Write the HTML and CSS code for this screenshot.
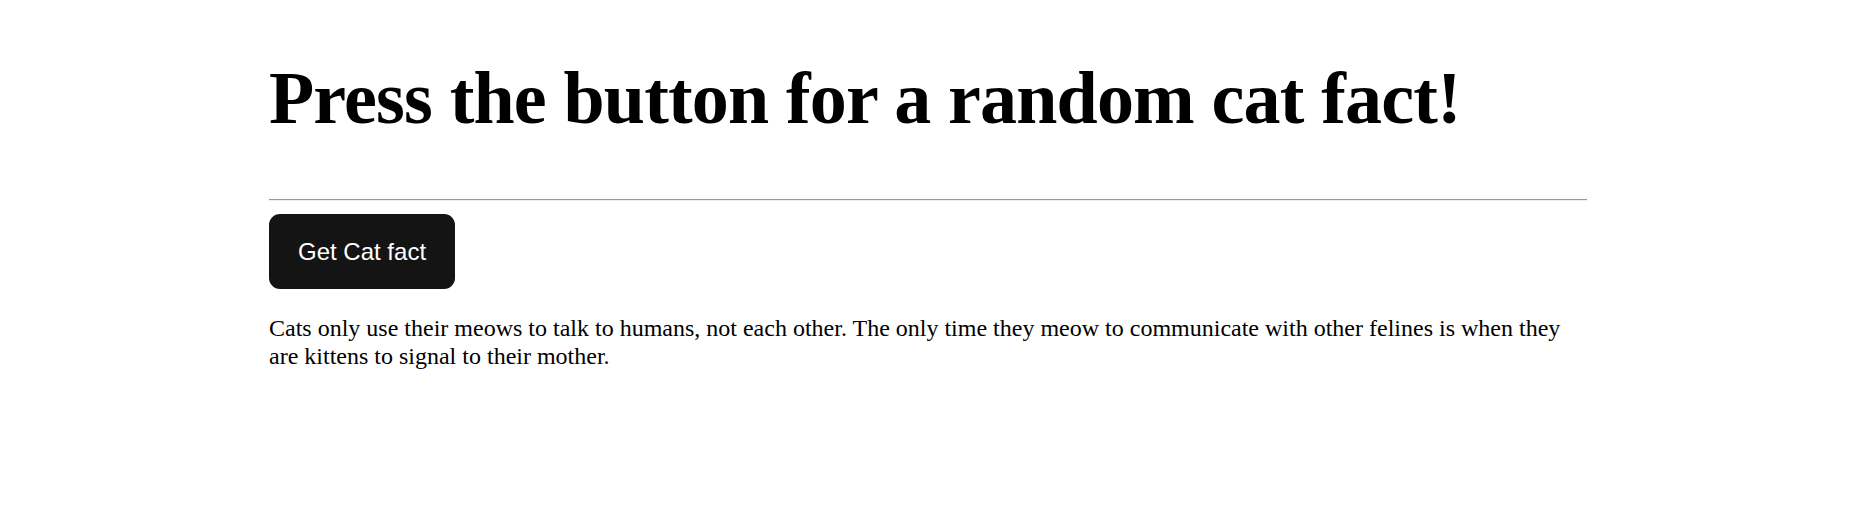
FILE: index.html
```html
<!DOCTYPE html>
<html>
<head>
<meta charset="utf-8">
<link rel="stylesheet" href="styles.css">
</head>
<body>
<main class="page">
  <h1 class="title">Press the button for a random cat fact!</h1>
  <hr class="rule">
  <button class="fact-btn">Get Cat fact</button>
  <p class="fact">Cats only use their meows to talk to humans, not each other. The only time they meow to communicate with other felines is when they are kittens to signal to their mother.</p>
</main>
</body>
</html>
```
FILE: styles.css
```css
html, body {
  margin: 0;
  padding: 0;
  background: #ffffff;
}
.page {
  width: 1318px;
  margin-left: 269px;
  padding-top: 56px;
  font-family: "Liberation Serif", "Times New Roman", serif;
  color: #000;
}
.title {
  font-size: 74px;
  font-weight: 700;
  letter-spacing: -0.83px;
  line-height: 85px;
  margin: 0 0 58px 0;
}
.rule {
  margin: 0 0 13px 0;
  border: 0;
  border-top: 1px solid #9a9a9a;
  border-bottom: 1px solid #eeeeee;
  height: 0;
}
.fact-btn {
  display: block;
  font-family: "Liberation Sans", Arial, sans-serif;
  font-size: 24px;
  color: #ffffff;
  background: #141414;
  border: 0;
  border-radius: 11px;
  padding: 0 29px;
  height: 75px;
  margin: 0 0 26px 0;
}
.fact {
  font-size: 24px;
  line-height: 27.6px;
  margin: 0;
}
```
